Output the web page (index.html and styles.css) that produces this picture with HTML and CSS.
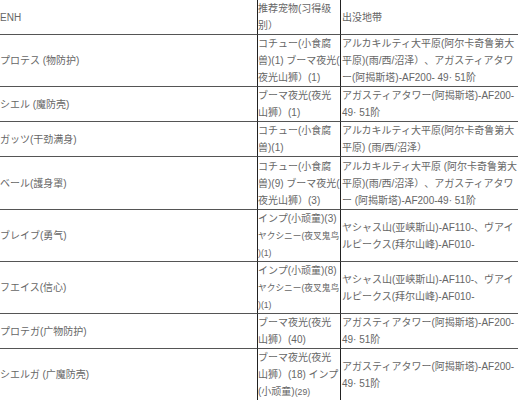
FILE: index.html
```html
<!DOCTYPE html>
<html lang="zh-CN">
<head>
<meta charset="utf-8">
<title>ENH</title>
<link rel="stylesheet" href="styles.css">
</head>
<body>
<table class="enh-table">
  <tr>
    <td class="c1">ENH</td>
    <td class="c2">推荐宠物(习得级别）</td>
    <td class="c3">出没地带</td>
  </tr>
  <tr>
    <td class="c1">プロテス (物防护)</td>
    <td class="c2">コチュー(小食腐兽)(1) ブーマ夜光(<wbr>夜光山狮）(1)</td>
    <td class="c3">アルカキルティ大平原(阿尔卡奇鲁第大平原)(雨/西/沼泽）、アガスティアタワー(阿揭斯塔)-AF200- 49· 51阶</td>
  </tr>
  <tr>
    <td class="c1">シエル (魔防壳)</td>
    <td class="c2">ブーマ夜光(夜光山狮）(1)</td>
    <td class="c3">アガスティアタワー(阿揭斯塔)-AF200- 49· 51阶</td>
  </tr>
  <tr>
    <td class="c1">ガッツ(干劲满身)</td>
    <td class="c2">コチュー(小食腐兽)(1)</td>
    <td class="c3">アルカキルティ大平原(阿尔卡奇鲁第大平原) (雨/西/沼泽）</td>
  </tr>
  <tr class="tall">
    <td class="c1">ベール(護身罩)</td>
    <td class="c2">コチュー(小食腐兽)(9) ブーマ夜光(<wbr>夜光山狮）(3)</td>
    <td class="c3">アルカキルティ大平原 (阿尔卡奇鲁第大平原)(雨/西/沼泽）、アガスティアタワー (阿揭斯塔)-AF200-49· 51阶</td>
  </tr>
  <tr>
    <td class="c1">ブレイブ(勇气)</td>
    <td class="c2">インプ(小顽童)(3) <span class="small">ヤクシニー(夜叉鬼鸟<wbr>)(1)</span></td>
    <td class="c3">ヤシャス山(亚峡斯山)-AF110-、ヴアイルピークス(拜尔山峰)-AF010-</td>
  </tr>
  <tr>
    <td class="c1">フエイス(信心)</td>
    <td class="c2">インプ(小顽童)(8) <span class="small">ヤクシニー(夜叉鬼鸟<wbr>)(1)</span></td>
    <td class="c3">ヤシャス山(亚峡斯山)-AF110-、ヴアイルピークス(拜尔山峰)-AF010-</td>
  </tr>
  <tr>
    <td class="c1">プロテガ(广物防护)</td>
    <td class="c2">ブーマ夜光(夜光山狮）(40)</td>
    <td class="c3">アガスティアタワー(阿揭斯塔)-AF200- 49· 51阶</td>
  </tr>
  <tr>
    <td class="c1">シエルガ (广魔防壳)</td>
    <td class="c2">ブーマ夜光(夜光山狮）(18) インプ(小顽童)<span class="small">(29)</span></td>
    <td class="c3">アガスティアタワー(阿揭斯塔)-AF200- 49· 51阶</td>
  </tr>
</table>
</body>
</html>
```

FILE: styles.css
```css
html, body {
  margin: 0;
  padding: 0;
  overflow: hidden;
  background: #ffffff;
}

body {
  font-family: "Liberation Sans", "Noto Sans CJK SC", sans-serif;
  font-size: 10px;
  color: #666666;
  text-spacing-trim: space-all;
}

.enh-table {
  border-collapse: separate;
  border-spacing: 0;
  table-layout: fixed;
  width: 520px;
}

.enh-table td {
  box-sizing: border-box;
  padding: 0;
  border-bottom: 1px solid #555555;
  line-height: 17px;
  vertical-align: middle;
}

.enh-table .tall td {
  padding-top: 1px;
}

.c1 {
  width: 257px;
}

.c2 {
  width: 83px;
  border-left: 1px solid #222222;
}

.c3 {
  width: 180px;
  border-left: 1px solid #222222;
  padding-left: 1px !important;
}

.small {
  font-size: 8.7px;
  line-height: 12px;
}
```
